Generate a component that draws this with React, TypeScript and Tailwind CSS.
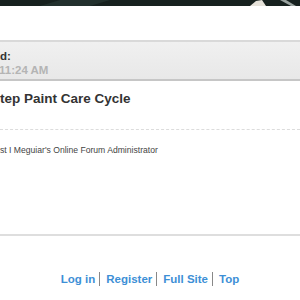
export default function App() {
    const font = { fontFamily: '"Liberation Sans", Arial, sans-serif' }
    return (
        <div className="w-[300px] h-[300px] overflow-hidden bg-white flex flex-col" style={font}>
            <div className="h-[6px] bg-[#17211f] relative overflow-hidden">
                <svg width="300" height="6" viewBox="0 0 300 6" className="absolute inset-0">
                    <polygon points="250,6 256,1 262,0 266,6" fill="#e6e2da" />
                    <polygon points="280,0 286,0 296,6 291,6" fill="#9aa3a0" />
                    <polygon points="60,0 110,0 90,6 40,6" fill="#22302d" />
                </svg>
            </div>
            <div className="h-[34px]" />
            <div className="h-[41px] border-t-2 border-b-2 border-t-[#d9d9d9] border-b-[#c6c6c6] bg-gradient-to-b from-[#f0f0f0] to-[#e8e8e8] flex flex-col pt-[7px]">
                <div className="text-[11.5px] font-bold leading-[14px] text-[#333]">d:</div>
                <div className="text-[11.5px] font-bold leading-[14px] text-[#b4b4b4] -ml-[1px]">11:24 AM</div>
            </div>
            <div className="pt-[9px] text-[13.5px] font-bold leading-[18px] text-[#333]">tep Paint Care Cycle</div>
            <div className="mt-[21px] border-t border-dashed border-[#dcdcdc]" />
            <div className="pt-[15px] text-[8.6px] leading-[11px] text-[#444]">st I Meguiar's Online Forum Administrator</div>
            <div className="mt-[78px] h-[2px] bg-[#dedede]" />
            <div className="flex justify-center items-center pt-[36px] text-[11.5px] font-bold text-[#3d8fd6] leading-[14px]">
                <span className="pr-[4px] border-r border-[#888]">Log in</span>
                <span className="pl-[6px] pr-[4px] border-r border-[#888]">Register</span>
                <span className="pl-[6px] pr-[4px] border-r border-[#888]">Full Site</span>
                <span className="pl-[6px]">Top</span>
            </div>
        </div>
    )
}
